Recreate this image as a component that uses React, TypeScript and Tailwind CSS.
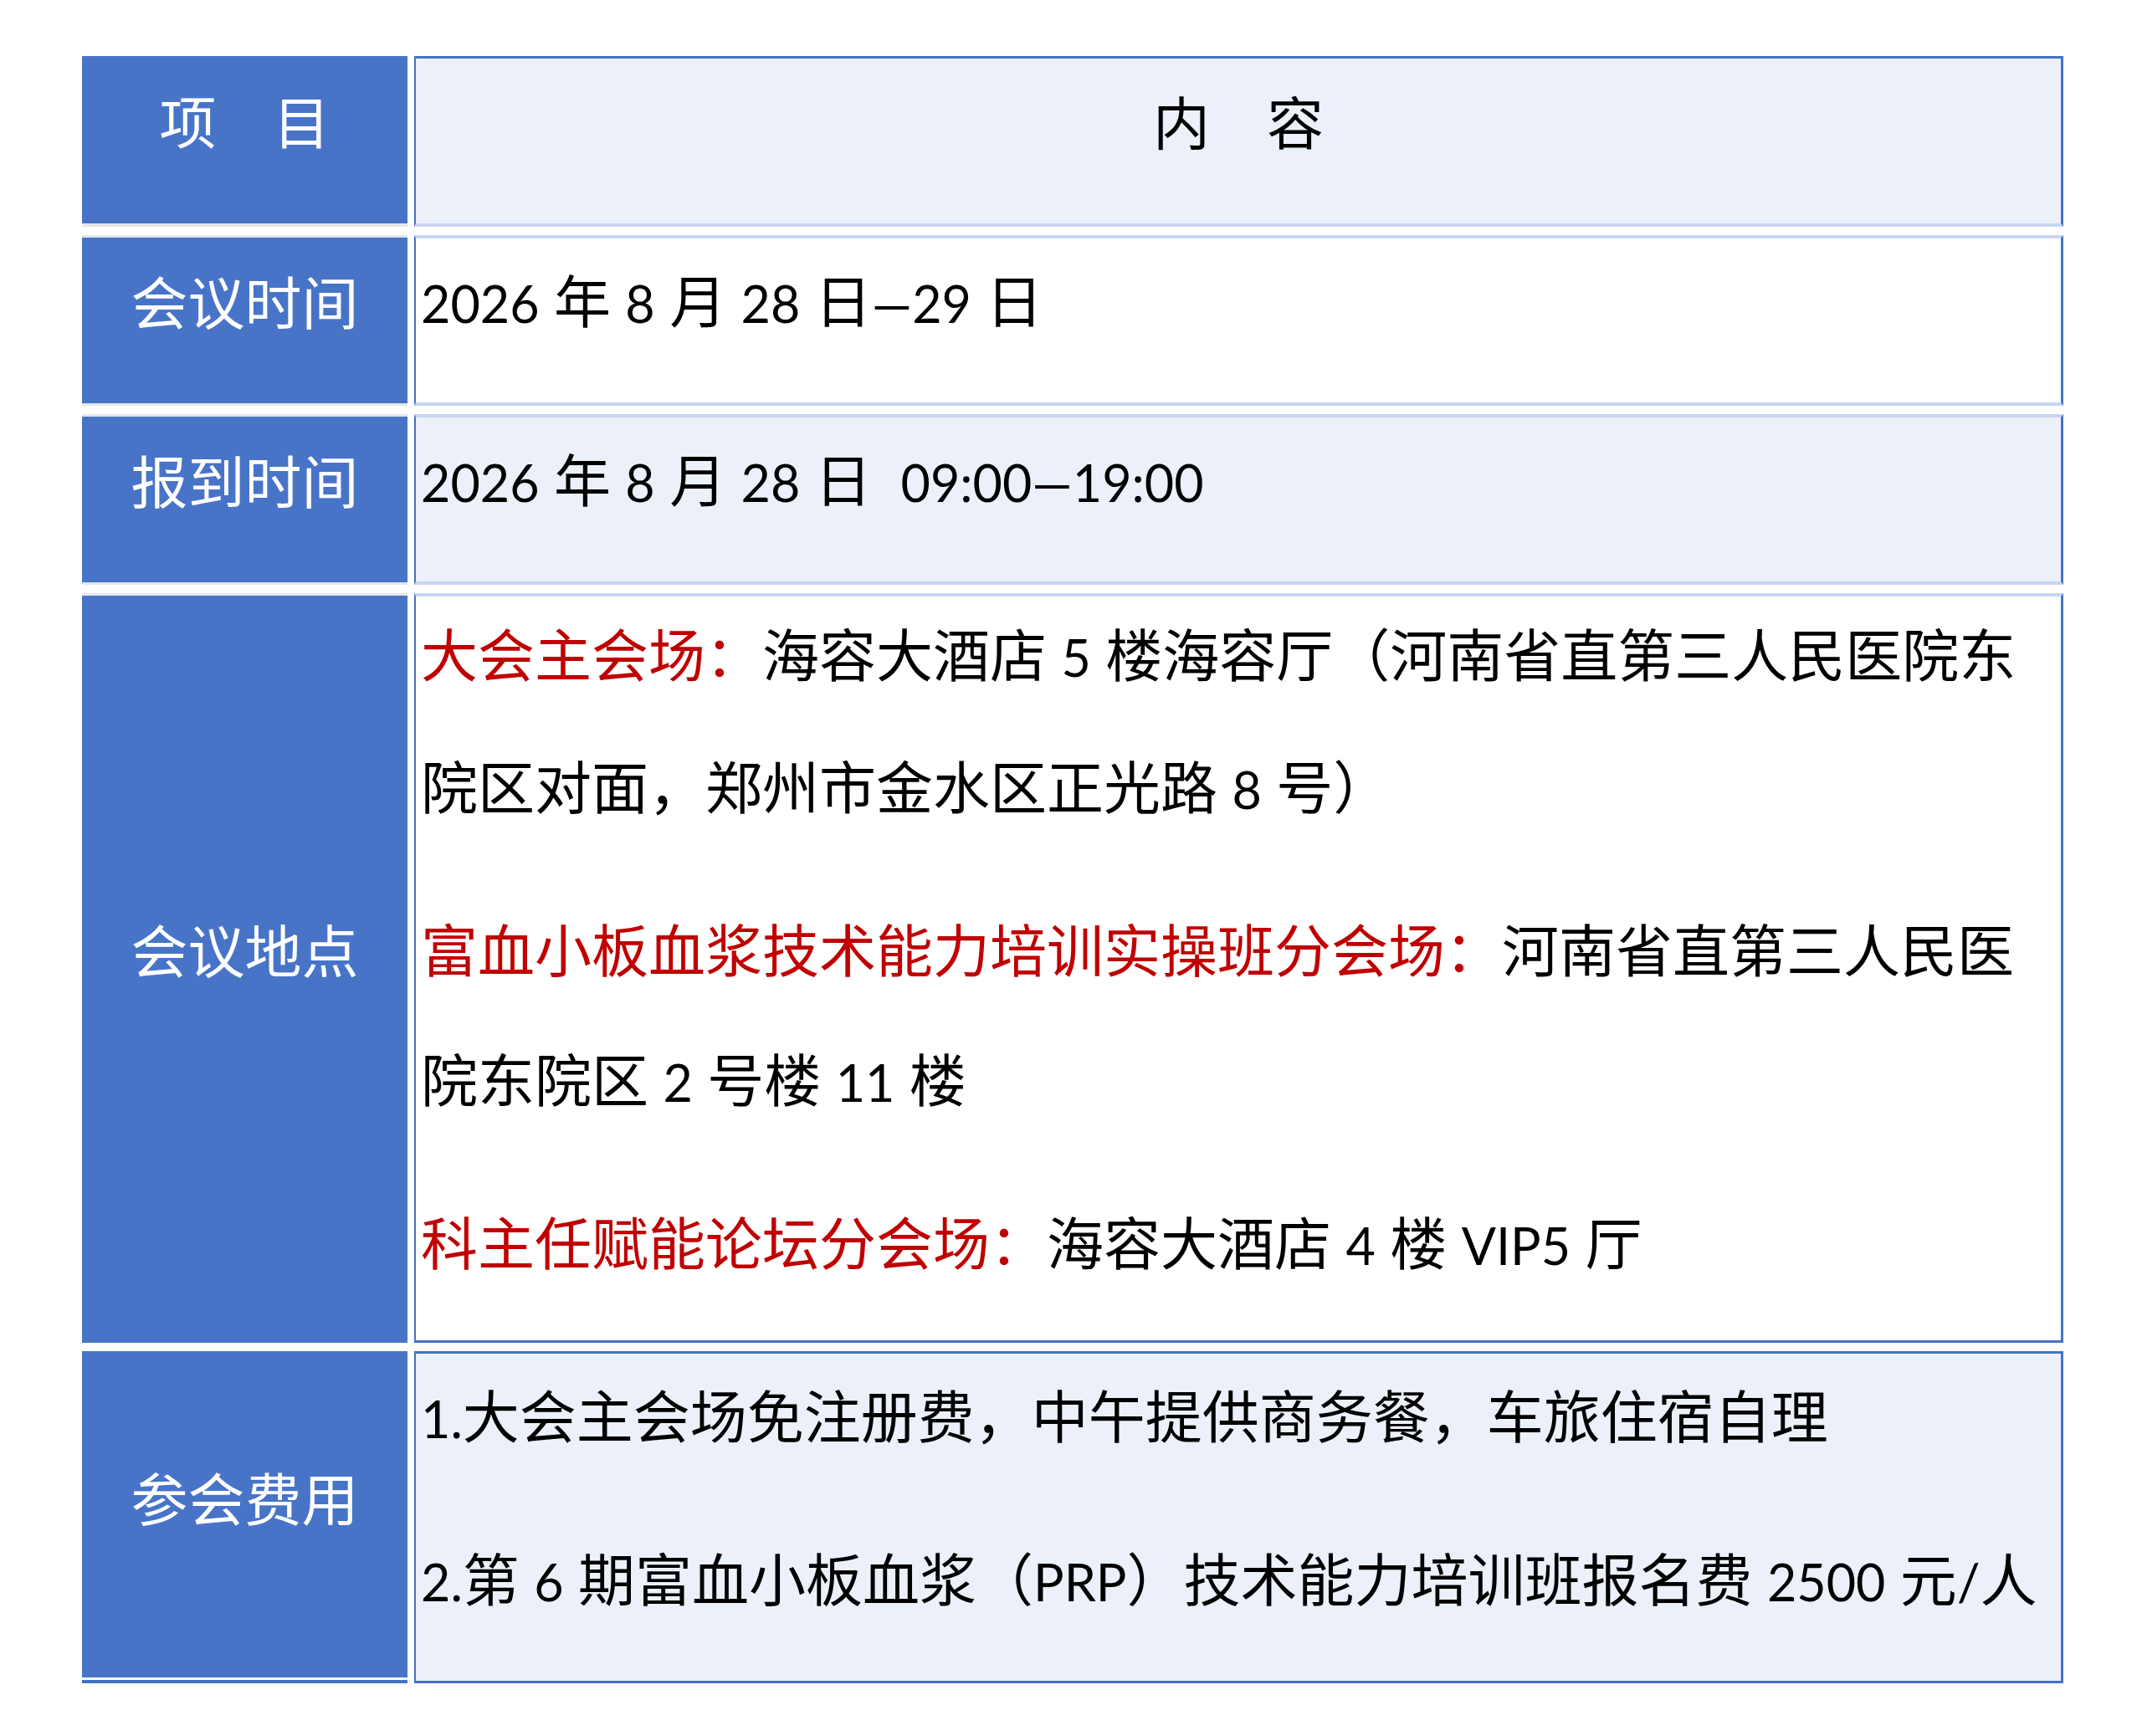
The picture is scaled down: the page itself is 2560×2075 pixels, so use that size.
import React from 'react';

const FONT = "font-['Lato','Noto_Sans_CJK_SC',sans-serif]";

const mix = (text: string) =>
  text.split(/([0-9A-Za-z.:/—]+)/).map((part, i) =>
    i % 2 === 1 ? (
      <span key={i} className="text-[61px]">
        {part}
      </span>
    ) : (
      part
    )
  );

type Row = {
  label: string;
  height: string;
  labelClass: string;
  cellClass: string;
  align?: 'center' | 'left';
  body: React.ReactNode;
};

const Red = ({ children }: { children: React.ReactNode }) => (
  <span className="text-[#c00000]">{children}</span>
);

const rows: Row[] = [
  {
    label: '项\u3000目',
    height: 'h-[204px]',
    labelClass: 'border-b-[4px] border-b-[#e3e6ec]',
    cellClass: 'bg-[#ecf0f9] border-t-[3px] border-t-[#4472c4] border-b-[4px] border-b-[#c9d5ef]',
    align: 'center',
    body: <p>内{'\u3000'}容</p>,
  },
  {
    label: '会议时间',
    height: 'h-[204px]',
    labelClass: 'border-y-[3px] border-y-[#e3e6ec]',
    cellClass: 'bg-white border-y-[4px] border-y-[#c9d5ef]',
    body: <p>{mix('2026 年 8 月 28 日—29 日')}</p>,
  },
  {
    label: '报到时间',
    height: 'h-[204px]',
    labelClass: 'border-y-[3px] border-y-[#e3e6ec]',
    cellClass: 'bg-[#ecf0f9] border-y-[4px] border-y-[#c9d5ef]',
    body: <p className="whitespace-pre">{mix('2026 年 8 月 28 日  09:00—19:00')}</p>,
  },
  {
    label: '会议地点',
    height: 'h-[896px]',
    labelClass: 'border-t-[3px] border-t-[#e3e6ec]',
    cellClass: 'bg-white border-t-[4px] border-t-[#c9d5ef] border-b-[3px] border-b-[#4472c4]',
    body: (
      <>
        <p>
          <Red>大会主会场：</Red>
          {mix('海容大酒店 5 楼海容厅（河南省直第三人民医院东')}
          <br />
          {mix('院区对面，郑州市金水区正光路 8 号）')}
        </p>
        <p className="mt-[37px]">
          <Red>富血小板血浆技术能力培训实操班分会场：</Red>河南省直第三人民医
          <br />
          {mix('院东院区 2 号楼 11 楼')}
        </p>
        <p className="mt-[37px]">
          <Red>科主任赋能论坛分会场：</Red>
          {mix('海容大酒店 4 楼 VIP5 厅')}
        </p>
      </>
    ),
  },
  {
    label: '参会费用',
    height: 'h-[397px]',
    labelClass: 'shadow-[inset_0_-4px_0_#4472c4,inset_0_-7px_0_#ffffff]',
    cellClass: 'bg-[#ecf0f9] border-y-[3px] border-y-[#4472c4]',
    body: (
      <>
        <p>{mix('1.大会主会场免注册费，中午提供商务餐，车旅住宿自理')}</p>
        <p className="mt-[37px]">{mix('2.第 6 期富血小板血浆（PRP）技术能力培训班报名费 2500 元/人')}</p>
      </>
    ),
  },
];

export default function App() {
  return (
    <div className={`min-h-[2075px] w-[2560px] bg-white pl-[98px] pt-[67px] ${FONT}`}>
      <div className="flex w-[2368px] flex-col gap-[10px]">
        {rows.map((row) => (
          <div key={row.label} className={`flex gap-[8px] ${row.height}`}>
            <div
              className={`flex w-[389px] shrink-0 items-center justify-center bg-[#4874c8] pb-[44px] text-[68px] leading-[155px] text-white ${row.labelClass}`}
            >
              {row.label}
            </div>
            <div
              className={`flex flex-1 flex-col justify-center overflow-hidden border-x-[#4472c4] border-l-[2px] border-r-[3px] pb-[44px] text-[68px] leading-[155px] whitespace-nowrap text-black ${
                row.align === 'center' ? 'items-center' : 'pl-[6px]'
              } ${row.cellClass}`}
            >
              {row.body}
            </div>
          </div>
        ))}
      </div>
    </div>
  );
}
